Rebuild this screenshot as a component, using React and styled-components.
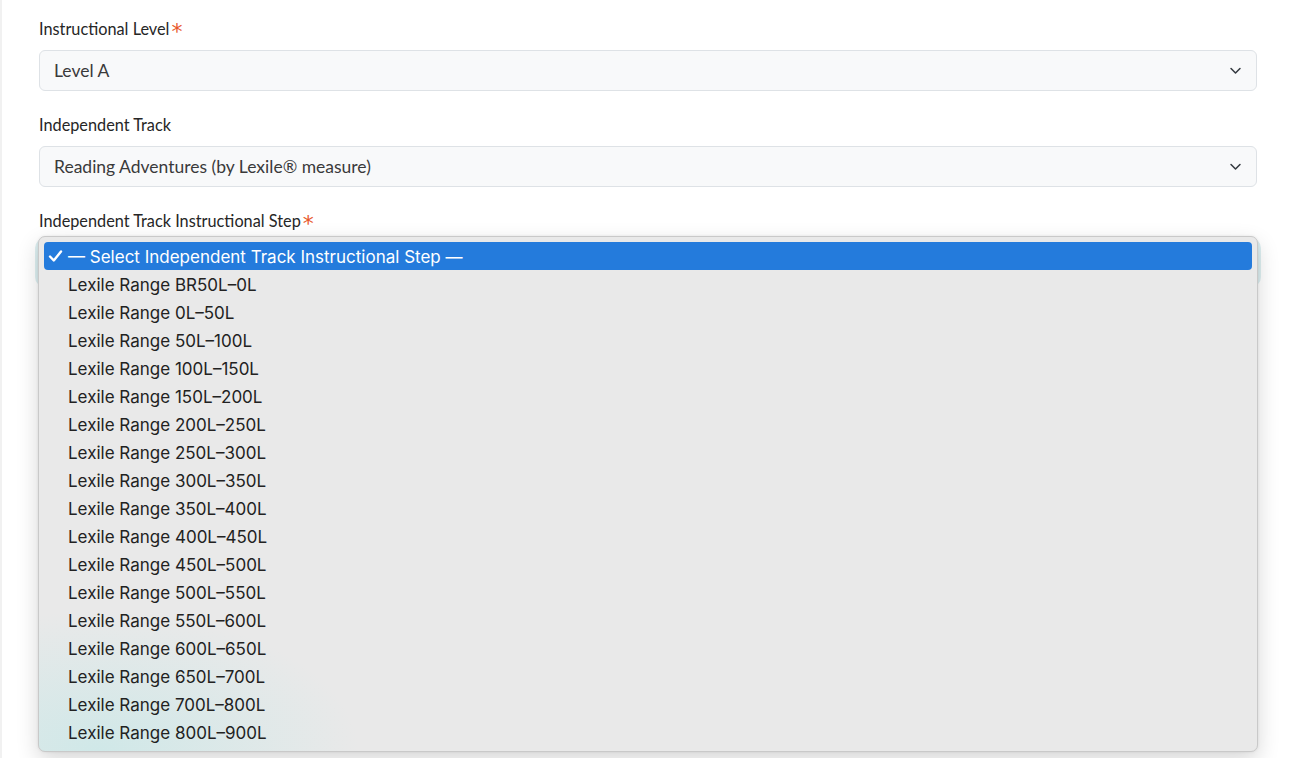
import React from 'react';
import styled, { createGlobalStyle } from 'styled-components';

const GlobalStyle = createGlobalStyle`
  html, body {
    margin: 0;
    padding: 0;
    background: #ffffff;
  }
  body {
    font-family: Lato, "Liberation Sans", sans-serif;
  }
`;

const Page = styled.div`
  width: 1293px;
  height: 758px;
  box-sizing: border-box;
  padding: 18px 36px 0 37px;
  border-left: 2px solid #f1f1f1;
  overflow: hidden;
`;

const Field = styled.div`
  display: flex;
  flex-direction: column;
  margin-bottom: 23px;
`;

const Label = styled.label`
  display: block;
  height: 22px;
  font-size: 16.3px;
  line-height: 22px;
  color: #262626;
  margin-bottom: 10px;
`;

const Required = styled.span`
  position: relative;
  top: 4px;
  margin-left: 2px;
  color: #e8582c;
  font-family: "DejaVu Sans", sans-serif;
  font-size: 22px;
  line-height: 0;
`;

const SelectWrap = styled.div`
  position: relative;
`;

const SelectBox = styled.div`
  height: 41px;
  box-sizing: border-box;
  display: flex;
  align-items: center;
  justify-content: space-between;
  padding: 0 14px 0 14px;
  background: #f8f9fa;
  border: 1px solid #dee2e6;
  border-radius: 6px;
  font-size: 17.5px;
  color: #3a3a3a;
  box-shadow: ${p => (p.$focused ? '0 0 0 4px rgba(120, 190, 200, 0.25)' : 'none')};
`;

const Chevron = () => (
  <svg width="13" height="13" viewBox="0 0 16 16" fill="none">
    <path d="M2.5 5.5l5.5 5.5 5.5-5.5" stroke="#343a40" strokeWidth="1.9" strokeLinecap="round" strokeLinejoin="round" />
  </svg>
);

const Menu = styled.div`
  position: absolute;
  top: -6px;
  left: -1px;
  right: -1px;
  box-sizing: border-box;
  padding: 5px;
  border: 1px solid #c9c9c9;
  border-radius: 7px;
  background:
    radial-gradient(ellipse 260px 140px at 60px 100%, rgba(205, 232, 232, 0.9), rgba(233, 233, 233, 0) 100%),
    #e9e9e9;
  box-shadow: 0 8px 22px rgba(0, 0, 0, 0.16), 0 0 3px rgba(0, 0, 0, 0.08);
  font-family: Inter, "Liberation Sans", sans-serif;
  z-index: 10;
`;

const Option = styled.div`
  position: relative;
  height: 28px;
  box-sizing: border-box;
  padding-top: 1px;
  display: flex;
  align-items: center;
  padding-left: 24px;
  border-radius: 4px;
  font-size: 17px;
  color: ${p => (p.$active ? '#ffffff' : '#222222')};
  background: ${p => (p.$active ? '#247bdc' : 'transparent')};
  white-space: nowrap;
`;

const Check = styled.svg`
  position: absolute;
  left: 4px;
  top: 7px;
`;

const ranges = [
  'BR50L–0L', '0L–50L', '50L–100L', '100L–150L', '150L–200L', '200L–250L',
  '250L–300L', '300L–350L', '350L–400L', '400L–450L', '450L–500L', '500L–550L',
  '550L–600L', '600L–650L', '650L–700L', '700L–800L', '800L–900L',
];

export default function App() {
  return (
    <>
      <GlobalStyle />
      <Page>
        <Field>
          <Label>Instructional Level<Required>*</Required></Label>
          <SelectBox>
            <span>Level A</span>
            <Chevron />
          </SelectBox>
        </Field>

        <Field>
          <Label>Independent Track</Label>
          <SelectBox>
            <span>Reading Adventures (by Lexile® measure)</span>
            <Chevron />
          </SelectBox>
        </Field>

        <Field>
          <Label>Independent Track Instructional Step<Required>*</Required></Label>
          <SelectWrap>
            <SelectBox $focused>
              <span />
              <Chevron />
            </SelectBox>
            <Menu>
              <Option $active>
                <Check width="15" height="14" viewBox="0 0 15 14" fill="none">
                  <path d="M2 7.5l3.8 4L13 2.5" stroke="#ffffff" strokeWidth="2.4" strokeLinecap="round" strokeLinejoin="round" />
                </Check>
                — Select Independent Track Instructional Step —
              </Option>
              {ranges.map(r => (
                <Option key={r}>Lexile Range {r}</Option>
              ))}
            </Menu>
          </SelectWrap>
        </Field>
      </Page>
    </>
  );
}
